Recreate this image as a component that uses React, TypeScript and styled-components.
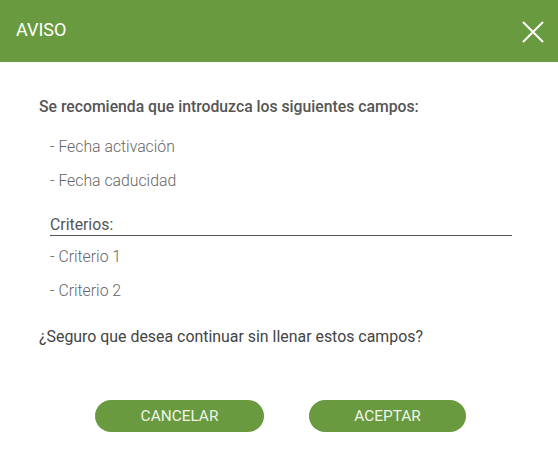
import styled, { createGlobalStyle } from 'styled-components';

const GlobalStyle = createGlobalStyle`
  html, body {
    margin: 0;
    padding: 0;
    background: #ffffff;
  }
  body {
    font-family: 'Roboto', 'Liberation Sans', sans-serif;
  }
`;

const Dialog = styled.div`
  width: 558px;
  height: 462px;
  background: #ffffff;
  display: flex;
  flex-direction: column;
`;

const Header = styled.div`
  height: 62px;
  background-color: #699a40;
  display: flex;
  align-items: center;
  justify-content: space-between;
  padding: 0 14px 0 16px;
  box-sizing: border-box;
`;

const Title = styled.h1`
  margin: 0;
  font-size: 18px;
  font-weight: 400;
  color: #ffffff;
  line-height: 20px;
  margin-top: -2px;
`;

const CloseButton = styled.button`
  width: 22px;
  height: 22px;
  padding: 0;
  border: none;
  background: none;
  cursor: pointer;
  display: flex;
  margin-top: 2px;
`;

const Body = styled.div`
  padding: 35px 39px 0 39px;
  display: flex;
  flex-direction: column;
`;

const Intro = styled.p`
  margin: 0;
  font-size: 15.75px;
  line-height: 20px;
  font-weight: 500;
  color: #555555;
`;

const List = styled.ul<{ $top: number }>`
  list-style: none;
  margin: ${(p) => p.$top}px 0 0 11px;
  padding: 0;
  display: flex;
  flex-direction: column;
  gap: 14px;
`;

const Item = styled.li`
  font-size: 15.8px;
  line-height: 20px;
  font-weight: 300;
  color: #666666;
`;

const SectionTitle = styled.div`
  margin: 24px 0 0 11px;
  width: 462px;
  font-size: 15.8px;
  line-height: 20px;
  font-weight: 400;
  color: #555555;
  border-bottom: 1px solid #555555;
`;

const Question = styled.p`
  margin: 26px 0 0 0;
  font-size: 15.9px;
  line-height: 20px;
  font-weight: 400;
  color: #444444;
`;

const Actions = styled.div`
  margin-top: 53px;
  padding-left: 3px;
  display: flex;
  justify-content: center;
  gap: 45px;
`;

const Button = styled.button<{ $width: number }>`
  width: ${(p) => p.$width}px;
  height: 32px;
  padding: 0;
  border: none;
  border-radius: 16px;
  background-color: #699a40;
  color: #eef5e8;
  font-family: 'Roboto', 'Liberation Sans', sans-serif;
  font-size: 15.4px;
  font-weight: 400;
  cursor: pointer;
`;

const CloseIcon = () => (
  <svg width="22" height="22" viewBox="0 0 22 22" fill="none">
    <path d="M1 1 L21 21 M21 1 L1 21" stroke="#ffffff" strokeWidth="2" />
  </svg>
);

const App = () => {
  return (
    <>
      <GlobalStyle />
      <Dialog>
        <Header>
          <Title>AVISO</Title>
          <CloseButton aria-label="Cerrar">
            <CloseIcon />
          </CloseButton>
        </Header>
        <Body>
          <Intro>Se recomienda que introduzca los siguientes campos:</Intro>
          <List $top={20}>
            <Item>- Fecha activación</Item>
            <Item>- Fecha caducidad</Item>
          </List>
          <SectionTitle>Criterios:</SectionTitle>
          <List $top={11}>
            <Item>- Criterio 1</Item>
            <Item>- Criterio 2</Item>
          </List>
          <Question>¿Seguro que desea continuar sin llenar estos campos?</Question>
          <Actions>
            <Button $width={169}>CANCELAR</Button>
            <Button $width={157}>ACEPTAR</Button>
          </Actions>
        </Body>
      </Dialog>
    </>
  );
};

export default App;
